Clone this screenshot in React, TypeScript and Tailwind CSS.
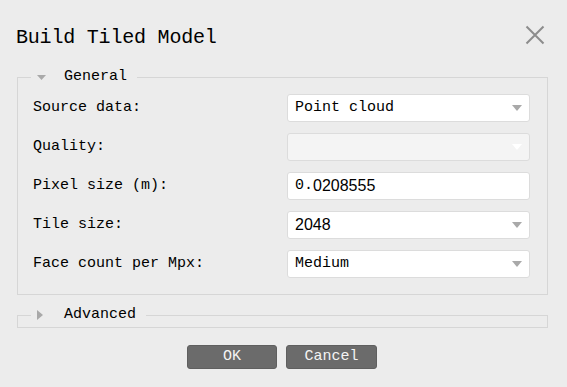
const mono = { fontFamily: '"Liberation Mono", "DejaVu Sans Mono", monospace' };

function Arrow({ light }: { light?: boolean }) {
  return (
    <svg width="10" height="6" viewBox="0 0 10 6" className="shrink-0">
      <path d="M0 0 L10 0 L5 6 Z" fill={light ? '#ffffff' : '#a9a9a9'} />
    </svg>
  );
}

function GroupHeader({ open, label }: { open: boolean; label: string }) {
  return (
    <div className="flex h-[14px] items-stretch">
      <div className="mt-[7px] w-[14px] border-l border-t border-[#d6d6d6]" />
      <div className="flex items-center pl-[6px] pr-[10px]">
        {open ? (
          <svg width="9" height="5" viewBox="0 0 9 5">
            <path d="M0 0 L9 0 L4.5 5 Z" fill="#a9a9a9" />
          </svg>
        ) : (
          <svg width="6" height="10" viewBox="0 0 6 10">
            <path d="M0 0 L6 5 L0 10 Z" fill="#a9a9a9" />
          </svg>
        )}
        <span className={`${open ? 'ml-[18px]' : 'ml-[21px]'} text-[15px] leading-[14px] text-black`}>
          {label}
        </span>
      </div>
      <div className="mt-[7px] flex-1 border-r border-t border-[#d6d6d6]" />
    </div>
  );
}

function Row({ label, children }: { label: string; children: React.ReactNode }) {
  return (
    <div className="flex items-center">
      <div className="w-[254px] text-[15px] text-black">{label}</div>
      {children}
    </div>
  );
}

function Combo({ value, disabled, sans }: { value?: string; disabled?: boolean; sans?: boolean }) {
  return (
    <div
      className={`flex h-[28px] w-[243px] items-center justify-between rounded-[3px] border border-[#dcdcdc] pl-[7px] pr-[7px] ${
        disabled ? 'bg-[#f4f4f4]' : 'bg-white'
      }`}
    >
      <span
        className={`${sans ? 'text-[16px]' : 'text-[15px]'} text-black`}
        style={sans ? { fontFamily: '"Liberation Sans", Arial, sans-serif' } : undefined}
      >
        {value}
      </span>
      <Arrow light={disabled} />
    </div>
  );
}

export default function App() {
  return (
    <div className="h-[387px] w-[567px] overflow-hidden bg-[#ececec]" style={mono}>
      <div className="flex h-[48px] items-start pl-[16px] pr-[22px] pt-[25px]">
        <div className="mt-[3px] flex-1 text-[20px] leading-[20px] tracking-[-0.2px] text-black">
          Build Tiled Model
        </div>
        <svg width="20" height="20" viewBox="0 0 20 20">
          <path d="M1.5 1.5 L18.5 18.5 M18.5 1.5 L1.5 18.5" stroke="#8c8c8c" strokeWidth="2" />
        </svg>
      </div>

      <div className="ml-[17px] mt-[22px] w-[531px]">
        <GroupHeader open label="General" />
        <div className="flex flex-col gap-[11px] border-b border-l border-r border-[#d6d6d6] pb-[16px] pl-[15px] pt-[10px]">
          <Row label="Source data:">
            <Combo value="Point cloud" />
          </Row>
          <Row label="Quality:">
            <Combo disabled />
          </Row>
          <Row label="Pixel size (m):">
            <div className="flex h-[28px] w-[243px] items-center rounded-[3px] border border-[#dcdcdc] bg-white pl-[7px]">
              <span className="text-[15px] text-black">0.</span>
              <span className="text-[16px] text-black" style={{ fontFamily: '"Liberation Sans", Arial, sans-serif' }}>
                0208555
              </span>
            </div>
          </Row>
          <Row label="Tile size:">
            <Combo value="2048" sans />
          </Row>
          <Row label="Face count per Mpx:">
            <Combo value="Medium" />
          </Row>
        </div>

        <div className="mt-[13px]">
          <GroupHeader open={false} label="Advanced" />
          <div className="h-[6px] border-b border-l border-r border-[#d6d6d6]" />
        </div>
      </div>

      <div className="mt-[17px] flex justify-center gap-[9px] pr-[3px]">
        <button className="h-[24px] w-[90px] rounded-[3px] border border-[#5f5f5f] bg-[#6b6b6b] text-[15px] text-[#f4f4f4]">
          OK
        </button>
        <button className="h-[24px] w-[91px] rounded-[3px] border border-[#5f5f5f] bg-[#6b6b6b] text-[15px] text-[#f4f4f4]">
          Cancel
        </button>
      </div>
    </div>
  );
}
